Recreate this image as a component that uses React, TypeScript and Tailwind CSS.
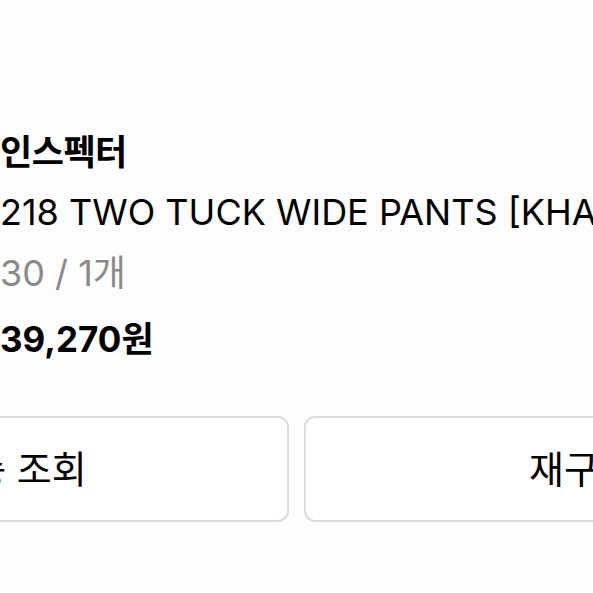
export default function App() {
  return (
    <div
      className="relative h-[593px] w-[593px] overflow-hidden bg-[#fdfdfd] text-black"
      style={{ fontFamily: '"Inter", "Noto Sans CJK KR", sans-serif' }}
    >
      <div className="ml-[-266px] w-[1125px] pt-[122px]">
        <div className="flex items-start gap-[16px]">
          <div className="h-[200px] w-[250px] shrink-0 bg-[#eeeeee]" />
          <div className="flex min-w-0 flex-col whitespace-nowrap">
            <p className="h-[60px] text-[35px] font-bold leading-[60px] tracking-[-0.5px]">인스펙터</p>
            <p className="h-[61px] text-[36px] leading-[60px]">218 TWO TUCK WIDE PANTS [KHAKI]</p>
            <p className="h-[66px] text-[36px] leading-[60px] text-[#8a8a8a]">30 / 1개</p>
            <p className="h-[60px] text-[35px] font-bold leading-[60px]">39,270원</p>
          </div>
        </div>
        <div className="mt-[47px] flex gap-[15px]">
          <button
            type="button"
            className="flex h-[106px] w-[555px] items-center justify-center rounded-[11px] border-2 border-[#dcdcdc] bg-white text-[38px]"
          >
            배송 조회
          </button>
          <button
            type="button"
            className="flex h-[106px] w-[555px] items-center justify-center rounded-[11px] border-2 border-[#dcdcdc] bg-white text-[38px]"
          >
            재구매
          </button>
        </div>
      </div>
    </div>
  );
}
